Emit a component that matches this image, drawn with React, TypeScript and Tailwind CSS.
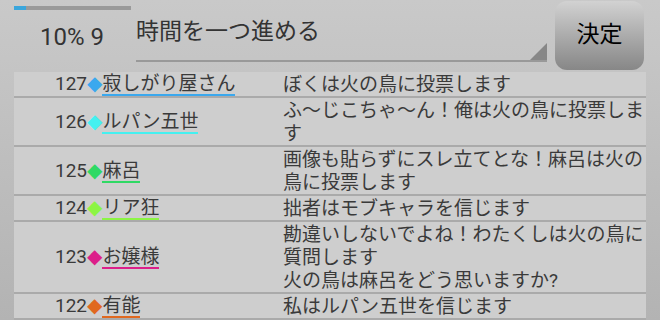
import React from "react";

interface Post {
  no: number;
  name: string;
  color: string;
  body: string;
}

const posts: Post[] = [
  { no: 127, name: "寂しがり屋さん", color: "#3aa8ee", body: "ぼくは火の鳥に投票します" },
  { no: 126, name: "ルパン五世", color: "#44f0f0", body: "ふ〜じこちゃ〜ん！俺は火の鳥に投票します" },
  { no: 125, name: "麻呂", color: "#2fd964", body: "画像も貼らずにスレ立てとな！麻呂は火の鳥に投票します" },
  { no: 124, name: "リア狂", color: "#8cf544", body: "拙者はモブキャラを信じます" },
  {
    no: 123,
    name: "お嬢様",
    color: "#dc1f8a",
    body: "勘違いしないでよね！わたくしは火の鳥に質問します\n火の鳥は麻呂をどう思いますか?",
  },
  { no: 122, name: "有能", color: "#e0681f", body: "私はルパン五世を信じます" },
];

const colorClass: Record<string, { text: string; border: string }> = {
  "#3aa8ee": { text: "text-[#3aa8ee]", border: "border-[#3aa8ee]" },
  "#44f0f0": { text: "text-[#44f0f0]", border: "border-[#44f0f0]" },
  "#2fd964": { text: "text-[#2fd964]", border: "border-[#2fd964]" },
  "#8cf544": { text: "text-[#8cf544]", border: "border-[#8cf544]" },
  "#dc1f8a": { text: "text-[#dc1f8a]", border: "border-[#dc1f8a]" },
  "#e0681f": { text: "text-[#e0681f]", border: "border-[#e0681f]" },
};

function PostRow({ post }: { post: Post }) {
  const c = colorClass[post.color];
  return (
    <div className="flex pt-[1px] border-b-2 border-[#aaaaaa]">
      {/* number + name */}
      <div className="w-[269px] shrink-0 flex items-center pl-[41px]">
        <div className="text-[19px] leading-[21px] whitespace-nowrap">
          <span>{post.no}</span>
          <span className={`${c.text} font-['DejaVu_Sans'] text-[20px]`}>◆</span>
          <span className={`inline-block border-b-2 ${c.border}`}>{post.name}</span>
        </div>
      </div>

      {/* message */}
      <div className="flex-1 text-[19px] leading-[23px] whitespace-pre-line">
        {post.body}
      </div>
    </div>
  );
}

export default function App() {
  return (
    <div className="w-[660px] h-[320px] overflow-hidden bg-gradient-to-b from-[#c9c9c9] to-[#b3b3b3] font-['Roboto','Noto_Sans_CJK_JP',sans-serif] text-[#3a3a3a]">
      {/* Header */}
      <div className="flex h-[72px] pl-[14px]">
        <div className="w-[122px] shrink-0">
          <div className="mt-[6px] h-[4px] w-[117px] bg-[#9a9a9a]">
            <div className="h-full w-[12px] bg-[#3aa6dc]" />
          </div>
          <div className="mt-[15px] pl-[26px] text-[24px] leading-[24px] text-[#333333]">
            10% 9
          </div>
        </div>

        <div className="relative w-[411px] h-[62px] flex items-center border-b-2 border-[#999999]">
          <span className="mt-[2px] text-[23px] leading-[23px] text-[#333333]">時間を一つ進める</span>
          <svg className="absolute right-0 bottom-0" width="17" height="17" viewBox="0 0 17 17">
            <polygon points="17,0 17,17 0,17" fill="#878787" />
          </svg>
        </div>

        <button className="ml-[8px] mt-[1px] w-[89px] h-[69px] rounded-[12px] bg-gradient-to-b from-[#d2d2d2] to-[#878787] text-[23px] text-black">
          決定
        </button>
      </div>

      {/* List */}
      <div className="mx-[14px] bg-[#cecece]">
        {posts.map((p) => (
          <PostRow key={p.no} post={p} />
        ))}
      </div>
    </div>
  );
}
